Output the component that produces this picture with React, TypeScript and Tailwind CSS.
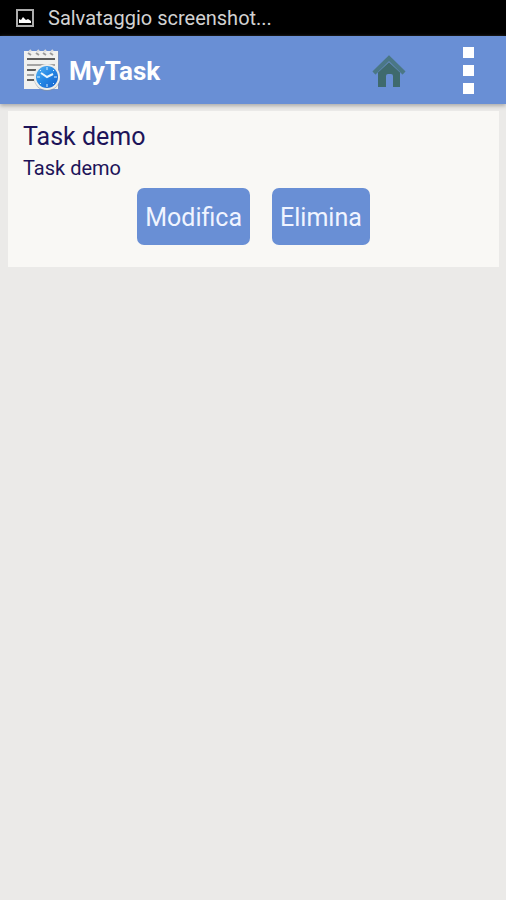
type Task = { title: string; description: string };

const tasks: Task[] = [{ title: "Task demo", description: "Task demo" }];

function PictureIcon() {
  return (
    <svg viewBox="0 0 18 18" className="size-[18px]" aria-hidden="true">
      <rect x="1" y="1" width="16" height="16" fill="#000" stroke="#adadad" strokeWidth="2" />
      <path d="M3 14V10L5 11L7 8L10 11L12 10L15 12V14Z" fill="#fff" />
    </svg>
  );
}

function LogoIcon() {
  return (
    <svg viewBox="0 0 38 42" className="h-[42px] w-[38px]" aria-hidden="true">
      <defs>
        <linearGradient id="clock" x1="0" y1="0" x2="1" y2="1">
          <stop offset="0" stopColor="#56b4f5" />
          <stop offset="0.5" stopColor="#2386e4" />
          <stop offset="1" stopColor="#1560cc" />
        </linearGradient>
      </defs>
      <path d="M2 2H36V40H2Z" fill="#7c8ba8" opacity="0.5" />
      <path d="M1 2H35V40H1Z" fill="#f1f1ef" />
      <g fill="none" stroke="#9b9b9b" strokeWidth="2">
        <path d="M5 4l3 2M13 4l3 2M20 4l3 2M27 4l3 2" />
        <path d="M6 3l2-2M14 3l2-2M21 3l2-2M28 3l2-2" stroke="#dedede" />
      </g>
      <g stroke="#5e5e5e" strokeWidth="2">
        <path d="M4 10H32M4 21H13M4 31H11" />
        <path d="M4 16H32M4 26H11" stroke="#a5a5a5" />
      </g>
      <circle cx="24" cy="29" r="13" fill="#8b9299" opacity="0.6" />
      <circle cx="24" cy="28" r="13" fill="#eeeeec" />
      <circle cx="24" cy="28" r="11" fill="url(#clock)" />
      <path d="M24 18v3M24 35v3M14 28h3M31 28h3M17 21l1 1M31 21l-1 1M17 35l1-1M31 35l-1-1" stroke="#d5edff" strokeWidth="1" />
      <path d="M18 24L24 28L30 25" fill="none" stroke="#e8f6ff" strokeWidth="2" />
    </svg>
  );
}

function HomeIcon() {
  return (
    <svg viewBox="0 0 34 34" className="size-[34px]" aria-hidden="true">
      <path d="M6 17L17 7L28 17V32H21V21Q21 19 19 19H16Q14 19 14 21V32H6Z" fill="#3f6a6d" />
      <path d="M2 18L17 4L32 18" fill="none" stroke="#5f86b4" strokeWidth="5" />
      <path d="M2 18L17 3L32 18" fill="none" stroke="#4a7785" strokeWidth="4" />
    </svg>
  );
}

function ActionButton({ label }: { label: string }) {
  return (
    <button type="button" className="h-[57px] rounded-[7px] bg-[#698fd5] px-2 pt-0.5 text-[25px] text-[#f0f4ff]">
      {label}
    </button>
  );
}

export default function App() {
  return (
    <div className="flex min-h-screen flex-col bg-[#ebeae8] font-['Roboto','Noto_Sans',sans-serif]">
      <div className="flex h-9 items-center gap-3 bg-black pl-4 text-xl text-[#d2d2d2]">
        <PictureIcon />
        <span className="pl-0.5">Salvataggio screenshot...</span>
      </div>
      <header className="flex h-[68px] items-center bg-[#698fd5] pr-[26px] pl-[23px] shadow-[0_2px_4px_#aaaaaa]">
        <LogoIcon />
        <h1 className="ml-2 pt-0.5 text-[26px] font-bold text-white">MyTask</h1>
        <button type="button" aria-label="Home" className="ml-auto pt-1">
          <HomeIcon />
        </button>
        <button type="button" aria-label="Menu" className="ml-[50px] flex w-6 flex-col items-center gap-[7px]">
          <span className="size-[11px] bg-white" />
          <span className="size-[11px] bg-white" />
          <span className="size-[11px] bg-white" />
        </button>
      </header>
      <main className="px-[7px] pt-[7px] pl-2">
        {tasks.map((task) => (
          <article key={task.title} className="bg-[#f9f8f5] px-[15px] pt-2.5 pb-[22px] text-[#1d1459]">
            <h2 className="text-[25px] leading-8">{task.title}</h2>
            <p className="text-xl leading-[30px]">{task.description}</p>
            <div className="mt-[5px] flex justify-center gap-[22px]">
              <ActionButton label="Modifica" />
              <ActionButton label="Elimina" />
            </div>
          </article>
        ))}
      </main>
    </div>
  );
}
